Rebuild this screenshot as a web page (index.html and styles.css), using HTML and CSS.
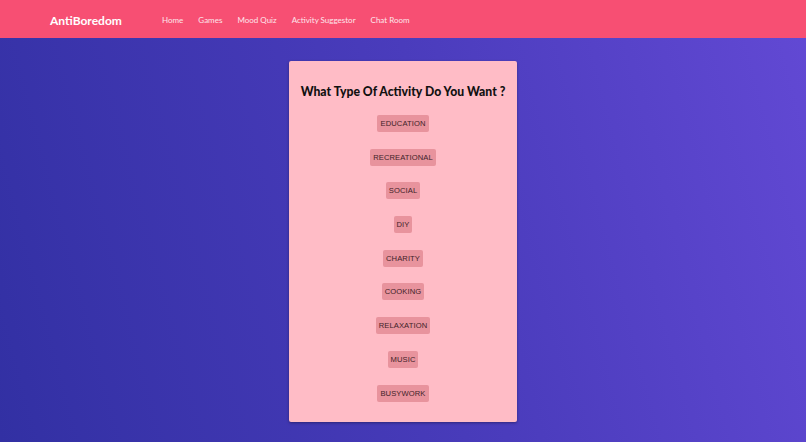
FILE: index.html
```html
<!DOCTYPE html>
<html>
<head>
<meta charset="utf-8">
<link rel="stylesheet" href="styles.css">
</head>
<body>
<nav class="navbar">
  <div class="brand">AntiBoredom</div>
  <ul class="links">
    <li>Home</li>
    <li>Games</li>
    <li>Mood Quiz</li>
    <li>Activity Suggestor</li>
    <li>Chat Room</li>
  </ul>
</nav>
<main class="main">
  <section class="card">
    <h1 class="title">What Type Of Activity Do You Want ?</h1>
    <div class="options">
      <button class="opt">EDUCATION</button>
      <button class="opt">RECREATIONAL</button>
      <button class="opt">SOCIAL</button>
      <button class="opt">DIY</button>
      <button class="opt">CHARITY</button>
      <button class="opt">COOKING</button>
      <button class="opt">RELAXATION</button>
      <button class="opt">MUSIC</button>
      <button class="opt">BUSYWORK</button>
    </div>
  </section>
</main>
</body>
</html>
```
FILE: styles.css
```css
* { box-sizing: border-box; }
html, body { margin: 0; padding: 0; height: 100%; }
body {
  font-family: Lato, "Open Sans", sans-serif;
  background: linear-gradient(75deg, #3230a3 0%, #4a3cbc 55%, #6249d4 100%);
  min-height: 442px;
}
.navbar {
  height: 38px;
  background: #f74f73;
  display: flex;
  align-items: center;
  padding-left: 50px;
  padding-top: 2px;
}
.brand {
  color: #fff;
  font-weight: 700;
  font-size: 12px;
  width: 112px;
}
.links {
  list-style: none;
  margin: 0;
  padding: 0;
  display: flex;
  gap: 15px;
}
.links li {
  color: #fde6eb;
  font-size: 8px;
}
.main {
  display: flex;
  justify-content: center;
  padding-top: 23px;
}
.card {
  width: 228px;
  height: 361px;
  background: #ffbcc6;
  border-radius: 2px;
  box-shadow: 0 1px 3px rgba(0,0,0,0.35);
  display: flex;
  flex-direction: column;
  align-items: center;
  padding-top: 22px;
}
.title {
  margin: 0;
  font-size: 12.2px;
  font-weight: 900;
  color: #111;
  line-height: 18px;
  white-space: nowrap;
}
.options {
  margin-top: 14px;
  display: flex;
  flex-direction: column;
  align-items: center;
  gap: 16.7px;
}
.opt {
  font-family: "Liberation Sans", Arial, sans-serif;
  font-size: 7.6px;
  letter-spacing: 0.1px;
  color: #3e2228;
  background: #e8939d;
  border: none;
  border-radius: 2px;
  height: 17px;
  padding: 0 3px;
  line-height: 17px;
}
```
